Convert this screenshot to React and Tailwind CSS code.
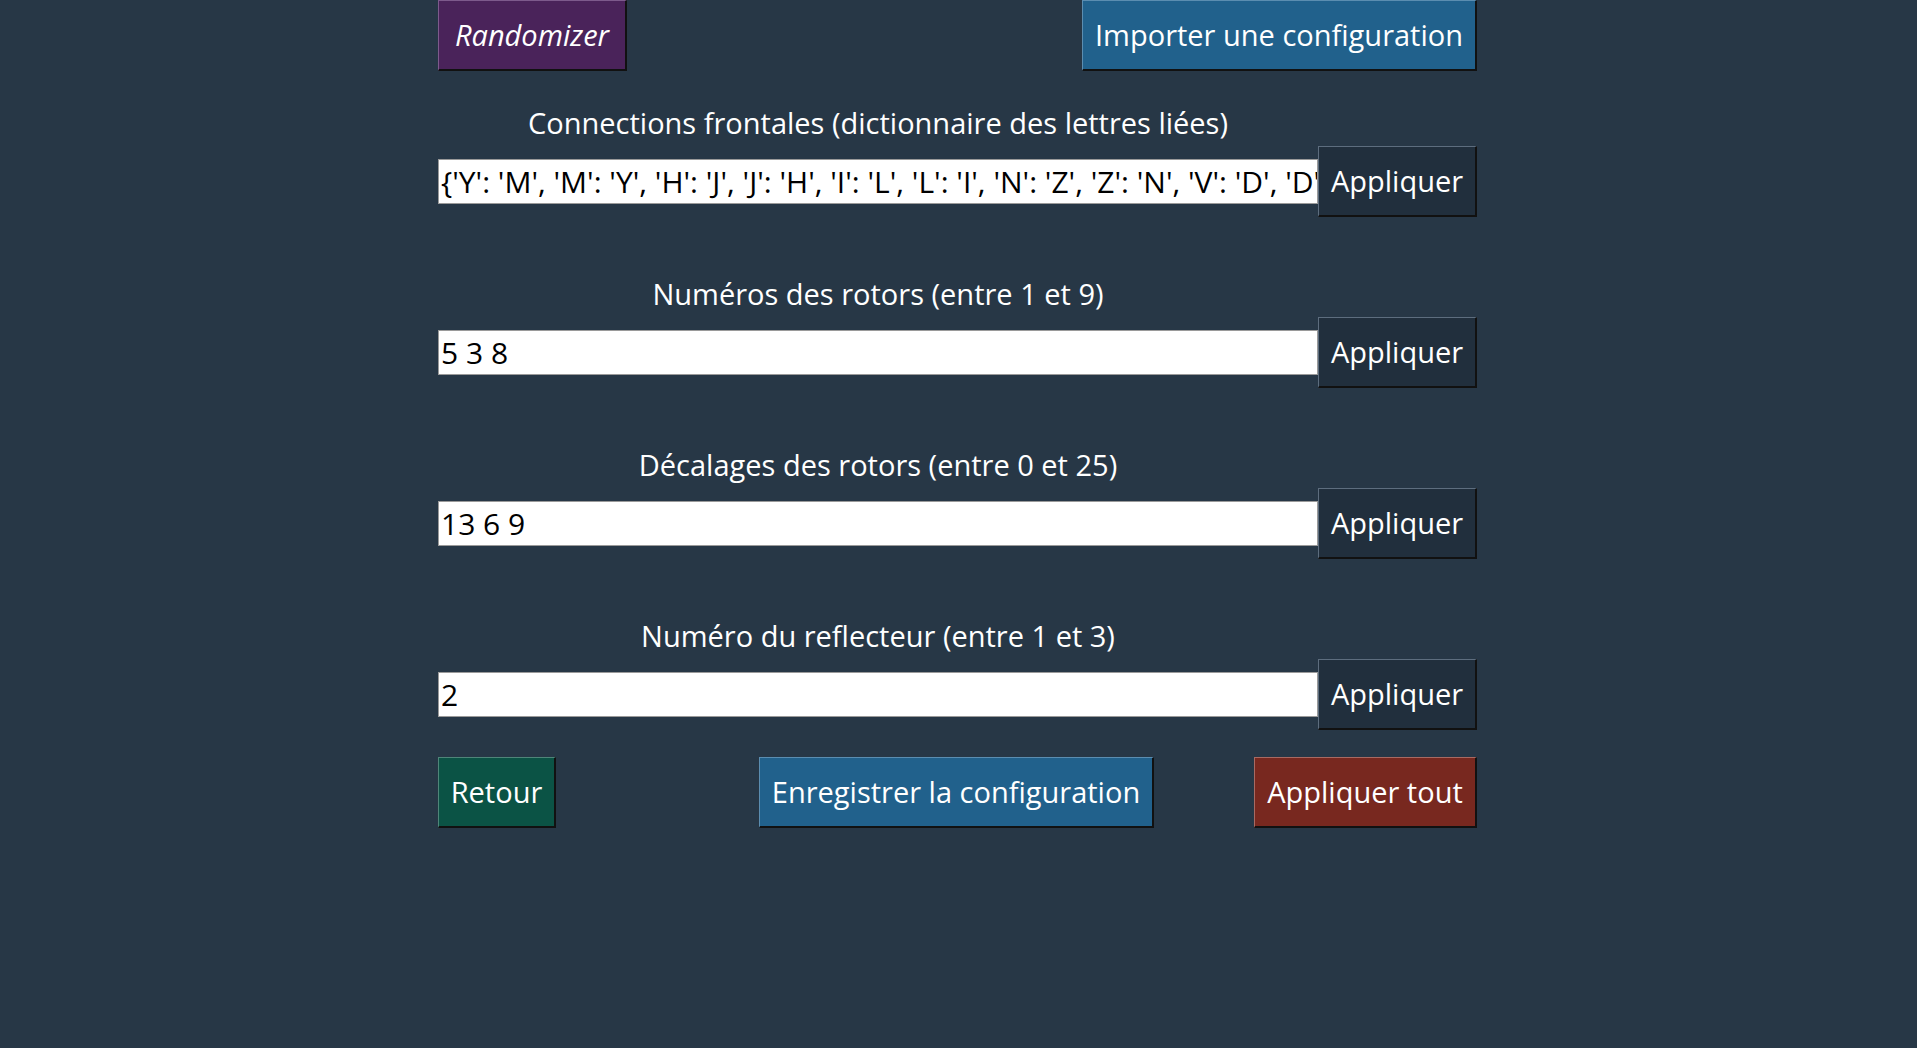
import { useState } from "react"

const font = { fontFamily: '"Open Sans", "Noto Sans", sans-serif' }

const Bouton = ({ className, children }) => (
  <button
    className={"h-[71px] shrink-0 text-[29px] text-white border-t border-l border-b-2 border-r-2 border-b-[#111] border-r-[#111] flex items-center justify-center " + className}
  >
    {children}
  </button>
)

const Ligne = ({ label, value, onChange }) => (
  <div className="flex flex-col">
    <div className="h-[47px] w-[880px] flex items-center justify-center text-[29px] text-white">{label}</div>
    <div className="flex items-center h-[71px]">
      <input
        type="text"
        value={value}
        onChange={onChange}
        className="w-[880px] h-[45px] bg-white text-black text-[30px] pl-[2px] border border-[#9a9a9a] outline-none"
        style={font}
      />
      <Bouton className="w-[159px] bg-[#212f3d] border-t-[#5d6d7e] border-l-[#5d6d7e]">Appliquer</Bouton>
    </div>
  </div>
)

const App = () => {
  const [config, setConfig] = useState({
    connections: "{'Y': 'M', 'M': 'Y', 'H': 'J', 'J': 'H', 'I': 'L', 'L': 'I', 'N': 'Z', 'Z': 'N', 'V': 'D', 'D': 'V'}",
    rotors: "5 3 8",
    decalages: "13 6 9",
    reflecteur: "2",
  })

  const handleChange = (name) => (e) => {
    const { value } = e.target
    setConfig(prev => ({ ...prev, [name]: value }))
  }

  return (
    <div className="min-h-screen bg-[#273746]" style={font}>
      <div className="w-[1039px] ml-[438px] flex flex-col">
        <div className="flex justify-between h-[70px]">
          <Bouton className="h-[70px] w-[189px] bg-[#4a235a] border-t-[#7d5a8c] border-l-[#7d5a8c] italic">Randomizer</Bouton>
          <Bouton className="h-[70px] w-[395px] bg-[#21618c] border-t-[#5b8db0] border-l-[#5b8db0]">Importer une configuration</Bouton>
        </div>
        <div className="flex flex-col gap-[53px] mt-[29px]">
          <Ligne label="Connections frontales (dictionnaire des lettres liées)" value={config.connections} onChange={handleChange("connections")} />
          <Ligne label="Numéros des rotors (entre 1 et 9)" value={config.rotors} onChange={handleChange("rotors")} />
          <Ligne label="Décalages des rotors (entre 0 et 25)" value={config.decalages} onChange={handleChange("decalages")} />
          <Ligne label="Numéro du reflecteur (entre 1 et 3)" value={config.reflecteur} onChange={handleChange("reflecteur")} />
        </div>
        <div className="flex mt-[27px]">
          <Bouton className="w-[118px] bg-[#0b5345] border-t-[#4f8579] border-l-[#4f8579]">Retour</Bouton>
          <Bouton className="w-[395px] ml-[203px] bg-[#21618c] border-t-[#5b8db0] border-l-[#5b8db0]">Enregistrer la configuration</Bouton>
          <Bouton className="w-[223px] ml-auto bg-[#78281f] border-t-[#a86a62] border-l-[#a86a62]">Appliquer tout</Bouton>
        </div>
      </div>
    </div>
  )
}

export default App
